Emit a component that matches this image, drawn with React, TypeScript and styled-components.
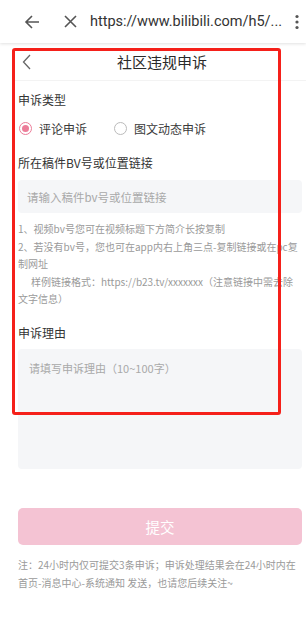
import React, { useState } from "react";
import styled, { createGlobalStyle } from "styled-components";

const GlobalStyle = createGlobalStyle`
  html, body {
    margin: 0;
    padding: 0;
    background: #fff;
    font-family: Roboto, "Noto Sans CJK SC", sans-serif;
  }
  * { box-sizing: border-box; }
`;

const Screen = styled.div`
  position: relative;
  width: 306px;
  height: 621px;
  overflow: hidden;
  background: #fff;
`;

const BrowserBar = styled.div`
  height: 43px;
  display: flex;
  align-items: center;
  padding: 0 6px 0 24px;
  background: #fff;
  box-shadow: 0 1px 3px rgba(0, 0, 0, 0.12);
  position: relative;
  z-index: 1;
`;

const BarIcon = styled.div<{ $gap?: number }>`
  display: flex;
  align-items: center;
  justify-content: center;
  margin-right: ${(p) => p.$gap ?? 0}px;
  color: #555;
`;

const Url = styled.div`
  flex: 1;
  font-family: Roboto, "Noto Sans", sans-serif;
  font-size: 14.5px;
  color: #333;
  white-space: nowrap;
  overflow: hidden;
`;

const Page = styled.div`
  margin-left: 14px;
  width: 292px;
`;

const Header = styled.div`
  position: relative;
  height: 38px;
  display: flex;
  align-items: center;
  justify-content: center;
  border-bottom: 1px solid #f3f3f3;
`;

const BackBtn = styled.div`
  position: absolute;
  left: 8px;
  top: 11px;
  display: flex;
`;

const Title = styled.div`
  font-family: "Noto Sans CJK SC", sans-serif;
  font-size: 15px;
  color: #2a2a2a;
  margin-left: 4px;
`;

const Body = styled.div`
  padding: 0 4px;
  font-family: "Noto Sans CJK SC", sans-serif;
`;

const Label = styled.div<{ $top: number }>`
  font-size: 12px;
  line-height: 18px;
  color: #333;
  margin-top: ${(p) => p.$top}px;
`;

const RadioRow = styled.div`
  display: flex;
  align-items: center;
  gap: 26px;
  margin-top: 10px;
  height: 18px;
`;

const RadioItem = styled.label`
  display: flex;
  align-items: center;
  gap: 7px;
  font-size: 12px;
  color: #3a3a3a;
  cursor: pointer;
`;

const RadioDot = styled.span<{ $on: boolean }>`
  margin-left: 1px;
  width: 13px;
  height: 13px;
  border-radius: 50%;
  border: 1px solid ${(p) => (p.$on ? "#ec7d99" : "#bbb")};
  display: flex;
  align-items: center;
  justify-content: center;
  &::after {
    content: "";
    width: 7px;
    height: 7px;
    border-radius: 50%;
    background: ${(p) => (p.$on ? "#ec7d99" : "transparent")};
  }
`;

const Field = styled.div<{ $h: number; $top: number }>`
  height: ${(p) => p.$h}px;
  margin-top: ${(p) => p.$top}px;
  background: #f5f6f8;
  border-radius: 4px;
  padding: 12px 11px;
  font-size: 11px;
  line-height: 14px;
  color: #a9a9a9;
`;

const InputField = styled(Field)`
  display: flex;
  align-items: center;
  padding: 0 9px;
  font-size: 11.5px;
`;

const Help = styled.div`
  margin-top: 7px;
  font-size: 10px;
  line-height: 17.5px;
  color: #9a9a9a;
`;

const HelpLine = styled.div<{ $indent?: number }>`
  text-indent: ${(p) => p.$indent ?? 0}px;
`;

const SubmitBtn = styled.button`
  display: block;
  width: 100%;
  height: 37px;
  margin-top: 39px;
  border: none;
  border-radius: 5px;
  background: #f4c3d3;
  color: #fff;
  font-family: "Noto Sans CJK SC", sans-serif;
  font-size: 14.5px;
`;

const Note = styled.div`
  margin-top: 11px;
  font-size: 10px;
  line-height: 18px;
  color: #9a9a9a;
`;

const Highlight = styled.div`
  position: absolute;
  left: 12px;
  top: 48px;
  width: 269px;
  height: 367px;
  border: 3px solid #f5201a;
  border-radius: 3px;
  pointer-events: none;
`;

export default function App() {
  const [type, setType] = useState(0);
  return (
    <Screen>
      <GlobalStyle />
      <BrowserBar>
        <BarIcon $gap={24}>
          <svg width="16" height="16" viewBox="0 0 16 16" fill="none" stroke="#555" strokeWidth="1.6">
            <path d="M15 8H2M8 2L2 8l6 6" />
          </svg>
        </BarIcon>
        <BarIcon $gap={13}>
          <svg width="13" height="13" viewBox="0 0 13 13" fill="none" stroke="#555" strokeWidth="1.6">
            <path d="M1 1l11 11M12 1L1 12" />
          </svg>
        </BarIcon>
        <Url>https://www.bilibili.com/h5/...</Url>
        <BarIcon>
          <svg width="6" height="16" viewBox="0 0 6 16" fill="#555">
            <circle cx="3" cy="2.5" r="1.6" />
            <circle cx="3" cy="8" r="1.6" />
            <circle cx="3" cy="13.5" r="1.6" />
          </svg>
        </BarIcon>
      </BrowserBar>
      <Page>
        <Header>
          <BackBtn>
            <svg width="10" height="16" viewBox="0 0 10 16" fill="none" stroke="#666" strokeWidth="1.3">
              <path d="M8 1L1.5 8 8 15" />
            </svg>
          </BackBtn>
          <Title>社区违规申诉</Title>
        </Header>
        <Body>
          <Label $top={10}>申诉类型</Label>
          <RadioRow>
            <RadioItem onClick={() => setType(0)}>
              <RadioDot $on={type === 0} />
              评论申诉
            </RadioItem>
            <RadioItem onClick={() => setType(1)}>
              <RadioDot $on={type === 1} />
              图文动态申诉
            </RadioItem>
          </RadioRow>
          <Label $top={17}>所在稿件BV号或位置链接</Label>
          <InputField $h={33} $top={8}>请输入稿件bv号或位置链接</InputField>
          <Help>
            <HelpLine>1、视频bv号您可在视频标题下方简介长按复制</HelpLine>
            <HelpLine>2、若没有bv号，您也可在app内右上角三点-复制链接或在pc复制网址</HelpLine>
            <HelpLine $indent={13}>样例链接格式：https://b23.tv/xxxxxxx（注意链接中需去除文字信息）</HelpLine>
          </Help>
          <Label $top={16}>申诉理由</Label>
          <Field $h={120} $top={7}>请填写申诉理由（10~100字）</Field>
          <SubmitBtn>提交</SubmitBtn>
          <Note>注：24小时内仅可提交3条申诉；申诉处理结果会在24小时内在首页-消息中心-系统通知 发送，也请您后续关注~</Note>
        </Body>
      </Page>
      <Highlight />
    </Screen>
  );
}
